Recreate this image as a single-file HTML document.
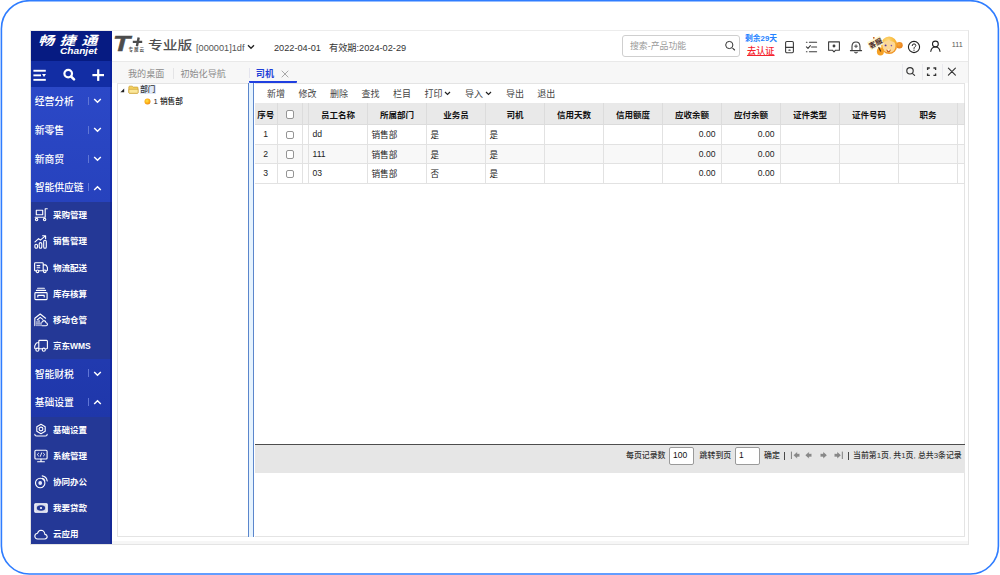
<!DOCTYPE html>
<html lang="zh-CN">
<head>
<meta charset="utf-8">
<title>司机</title>
<style>
*{box-sizing:border-box;margin:0;padding:0}
html,body{width:1000px;height:575px;overflow:hidden;background:#fff}
body{font-family:"Liberation Sans","Noto Sans CJK SC",sans-serif;font-size:9px;color:#222;position:relative}
.abs{position:absolute}
#frame{position:absolute;left:0;top:0}
#shot{position:absolute;left:30px;top:30px;width:938.6px;height:514.6px;background:#fff;border:1px solid #e4e4e4;border-top-color:#ececec;overflow:hidden}
/* sidebar */
#side{position:absolute;left:0;top:0;width:80.8px;height:515px;background:linear-gradient(#2b48c7 56px,#1f37aa 386px);color:#fff}
#logo{position:absolute;left:0;top:0;width:80.8px;height:30px;background:#061b82}
#tools{position:absolute;left:0;top:30px;width:80.8px;height:25.9px;background:#122da4}
.m1{position:absolute;left:0;width:80.8px;height:28.85px;font-size:9.8px;font-weight:500;line-height:29.8px;padding-left:3.7px;white-space:nowrap}
.m1 i{position:absolute;left:57.4px;top:10px;width:1px;height:8px;background:#6076d6}
.m1 svg{position:absolute;left:62px;top:11.4px}
.sub{position:absolute;left:0;width:80.8px;background:#243896}
.m2{position:absolute;left:0;width:80.8px;height:26.17px;font-size:8.5px;font-weight:700;line-height:26.6px;padding-left:22px;white-space:nowrap}
.m2 svg{position:absolute;left:3.3px;top:6.1px}
#lg1{position:absolute;left:7px;top:2.9px;font-size:12.4px;line-height:14px;font-weight:700;font-style:italic;letter-spacing:4.2px;white-space:nowrap;transform:scaleX(1.3);transform-origin:0 0;font-family:"Liberation Sans","Noto Sans CJK SC",sans-serif}
#lg2{position:absolute;left:29px;top:15.2px;font-size:8.6px;line-height:10px;font-weight:700;font-style:italic;white-space:nowrap;transform:scaleX(1.18);transform-origin:0 0}
/* header */
#head{position:absolute;left:80.8px;top:0;width:856px;height:31px;background:#fff;border-bottom:1.8px solid #e9e9e9}
#tabs{position:absolute;left:80.8px;top:31px;width:856px;height:20.5px;background:#f7f7f7}
.t{position:absolute;white-space:nowrap}
.wm{position:absolute;font-size:12px;line-height:14px;font-weight:700;color:rgba(0,0,0,0.022);transform:rotate(-15deg);transform-origin:0 50%;white-space:nowrap;pointer-events:none}

#head .t{top:0;line-height:30px;font-size:9.3px;color:#333}
#search{position:absolute;left:510.2px;top:4.4px;width:117.6px;height:21.6px;border:1px solid #cfcfcf;border-radius:3px;background:#fff}
#search span{position:absolute;left:7px;top:0;line-height:21px;font-size:8.9px;color:#999}
#tabs .t{top:0;line-height:25px;font-size:9.1px;color:#8a8a8a}
#tabs .sep{position:absolute;width:1px;background:#e9e9ee}
#act{position:absolute;left:137px;top:0;width:47.8px;height:20.6px;border-bottom:2px solid #1f3fe0;border-radius:0 0 1px 1px}
#tree{position:absolute;left:86px;top:51.5px;width:131.5px;height:454.8px;background:#fff;border:1px solid #e4e4e4;border-right:none}
#split{position:absolute;left:217.2px;top:51.5px;width:5.8px;height:454.3px;background:#e6f3fe;border-left:1.9px solid #5b86cc;border-right:1.9px solid #5b86cc}
#main{position:absolute;left:223.5px;top:51.5px;width:710.5px;height:454.8px;background:#fff;border:1px solid #e4e4e4;border-left:none}
#bstrip{position:absolute;left:80.8px;top:510px;width:858px;height:4px;background:#f6f6f6}
#sedge{position:absolute;left:78.8px;top:0;width:2px;height:515px;background:rgba(0,20,150,0.42)}
#tb{position:absolute;left:0;top:0;width:710px;height:20.5px}
#tb .t{top:0;line-height:20.4px;font-size:9px;color:#444}
#grid{position:absolute;left:0.5px;top:19.8px;width:709px;height:80px;border-collapse:collapse;table-layout:fixed;font-size:8.6px}
#grid th{height:21.1px;background:#e9e9e9;font-weight:700;font-size:8.5px;color:#111;border-right:1px solid #dcdcdc;border-bottom:1px solid #dcdcdc;text-align:center;padding:0;white-space:nowrap;overflow:hidden}
#grid td{height:19.65px;border-right:1px solid #e2e2e2;border-bottom:1px solid #e2e2e2;padding:0 0 0 3.5px;white-space:nowrap;overflow:hidden;color:#222}
#grid tr.alt td{background:#f8f8f8}
#grid td.c{text-align:center;padding:0}
#grid td.r{text-align:right;padding:0 5.5px 0 0}
.cb{display:inline-block;width:8.4px;height:8.4px;border:1px solid #959595;border-radius:2px;background:#fff;vertical-align:middle}
#pager{font-weight:500;position:absolute;left:0.5px;top:360px;width:709.5px;height:29.2px;background:#e6e6e6;border-top:1.2px solid #4d4d4d;font-size:7.9px;color:#333}
#pager .t{top:0;line-height:22.4px}
#pager .in{position:absolute;top:2.5px;height:17.5px;border:1px solid #9a9a9a;border-radius:2px;background:#fff;font-size:8.5px;line-height:15.5px;padding-left:3px;color:#111}

</style>
</head>
<body>
<svg id="frame" width="1000" height="575" viewBox="0 0 1000 575"><rect x="1.4" y="0.7" width="997" height="573.3" rx="28" ry="28" fill="#fff" stroke="#2f7dff" stroke-width="1.6"/></svg>
<div id="shot">
  <div id="side">
    <div id="logo"><span id="lg1">畅捷通</span><span id="lg2">Chanjet</span></div>
    <div id="tools"><svg width="81" height="27" viewBox="0 0 81 27"><g transform="translate(0 0.4)">
      <g fill="#fff"><rect x="2.4" y="8.4" width="12.4" height="1.9"/><rect x="2.4" y="13" width="7.6" height="1.9"/><rect x="2.4" y="17.5" width="12.4" height="1.9"/><path d="M11 12.5H15L13 15.5Z"/><rect x="61.4" y="12.6" width="11.6" height="2.2"/><rect x="66.1" y="7.9" width="2.2" height="11.6"/></g>
      <circle cx="37.2" cy="12.2" r="3.8" fill="none" stroke="#fff" stroke-width="2.2"/><path d="M40.2 15.2L43 18" stroke="#fff" stroke-width="2.6" stroke-linecap="round"/></g>
    </svg></div>
    <div class="m1" style="top:55.8px;padding-top:0px">经营分析<i></i><svg width="9" height="6" viewBox="0 0 9 6"><path d="M1.2 1 L4.5 4.3 L7.8 1" fill="none" stroke="#fff" stroke-width="1.45"/></svg></div>
    <div class="m1" style="top:84.65px;padding-top:0px">新零售<i></i><svg width="9" height="6" viewBox="0 0 9 6"><path d="M1.2 1 L4.5 4.3 L7.8 1" fill="none" stroke="#fff" stroke-width="1.45"/></svg></div>
    <div class="m1" style="top:113.5px;padding-top:0px">新商贸<i></i><svg width="9" height="6" viewBox="0 0 9 6"><path d="M1.2 1 L4.5 4.3 L7.8 1" fill="none" stroke="#fff" stroke-width="1.45"/></svg></div>
    <div class="m1" style="top:142.35px;padding-top:0px">智能供应链<i></i><svg width="9" height="6" viewBox="0 0 9 6"><path d="M1.2 5 L4.5 1.7 L7.8 5" fill="none" stroke="#fff" stroke-width="1.45"/></svg></div>
    <div class="sub" style="top:171.2px;height:157px">
      <div class="m2" style="top:0.0px"><svg width="14" height="14" viewBox="0 0 14 14" stroke="#fff" fill="none" stroke-width="1.12" stroke-linecap="round" stroke-linejoin="round"><rect x="2.3" y="2.2" width="6.4" height="4.6"/><path d="M13.3 0.8H11.2V9.3H1.2"/><circle cx="2.6" cy="11.6" r="1.2"/><circle cx="10.6" cy="11.6" r="1.2"/></svg>采购管理</div>
      <div class="m2" style="top:26.22px"><svg width="14" height="14" viewBox="0 0 14 14" stroke="#fff" fill="none" stroke-width="1.12" stroke-linecap="round" stroke-linejoin="round"><rect x="0.9" y="9.3" width="2.6" height="4" rx="1.3"/><rect x="5.2" y="7.6" width="2.6" height="5.7" rx="1.3"/><rect x="9.7" y="5.2" width="2.6" height="8.1" rx="1.3"/><path d="M1 6.8L4.6 3.6L6.4 5.2L11.4 0.9M8.6 0.8H11.6V3.8"/></svg>销售管理</div>
      <div class="m2" style="top:52.44px"><svg width="14" height="14" viewBox="0 0 14 14" stroke="#fff" fill="none" stroke-width="1.12" stroke-linecap="round" stroke-linejoin="round"><path d="M9.2 9.8H5.2M1.9 9.8H1.5Q0.6 9.8 0.6 8.9V2.6Q0.6 1.7 1.5 1.7H8.3Q9.2 1.7 9.2 2.6V9.8M9.2 3.9H11.2Q12 3.9 12.4 4.6L13.4 6.6V8.9Q13.4 9.8 12.5 9.8H12.4"/><circle cx="3.5" cy="10.3" r="1.3"/><circle cx="10.8" cy="10.3" r="1.3"/><path d="M3 4.6H5.8M3 6.8H5.8"/></svg>物流配送</div>
      <div class="m2" style="top:78.66px"><svg width="14" height="14" viewBox="0 0 14 14" stroke="#fff" fill="none" stroke-width="1.12" stroke-linecap="round" stroke-linejoin="round"><path d="M3.6 1.3H10.4M2.4 3.4H11.6"/><rect x="0.9" y="5.6" width="12.2" height="7" rx="0.8"/><path d="M3.8 10V8.4H10.2V10"/></svg>库存核算</div>
      <div class="m2" style="top:104.88px"><svg width="14" height="14" viewBox="0 0 14 14" stroke="#fff" fill="none" stroke-width="1.12" stroke-linecap="round" stroke-linejoin="round"><path d="M0.8 12.6V5.2L6.2 1L11.6 5.2M3.2 7L6.2 4.4L8.8 6.4"/><path d="M3 12.6V8.6M5 12.6V7.2M7 12.6V9.4" stroke-dasharray="0.9 0.9"/><path d="M8.2 12.8H12Q13.6 12.6 13.4 11Q13.2 9.8 12 9.7Q11.8 7.6 9.9 7.6Q8.2 7.7 7.9 9.4"/></svg>移动仓管</div>
      <div class="m2" style="top:131.1px"><svg width="14" height="14" viewBox="0 0 14 14" stroke="#fff" fill="none" stroke-width="1.12" stroke-linecap="round" stroke-linejoin="round"><path d="M4.6 9.8H8.4M12 9.8H12.6Q13.4 9.8 13.4 9V2.2Q13.4 1.4 12.6 1.4H5.6Q4.8 1.4 4.8 2.2V9.6M4.8 3.8H3.2Q2.4 3.8 2 4.5L0.7 7V9Q0.7 9.8 1.5 9.8"/><circle cx="3.4" cy="10.7" r="1.55"/><circle cx="9.8" cy="10.7" r="1.55"/></svg>京东WMS</div>
    </div>
    <div class="m1" style="top:328.2px;padding-top:0.8px">智能财税<i></i><svg width="9" height="6" viewBox="0 0 9 6"><path d="M1.2 1 L4.5 4.3 L7.8 1" fill="none" stroke="#fff" stroke-width="1.45"/></svg></div>
    <div class="m1" style="top:357.1px;padding-top:0.4px">基础设置<i></i><svg width="9" height="6" viewBox="0 0 9 6"><path d="M1.2 5 L4.5 1.7 L7.8 5" fill="none" stroke="#fff" stroke-width="1.45"/></svg></div>
    <div class="sub" style="top:386px;height:130px">
      <div class="m2" style="top:0.0px"><svg width="14" height="14" viewBox="0 0 14 14" stroke="#fff" fill="none" stroke-width="1.12" stroke-linecap="round" stroke-linejoin="round"><path d="M7 1.3L11.2 3.7V8.3L7 10.7L2.8 8.3V3.7Z"/><circle cx="7" cy="6" r="1.9"/><path d="M0.8 11.2Q0.8 13 2.6 13H11.4Q13.2 13 13.2 11.2"/></svg>基础设置</div>
      <div class="m2" style="top:26.05px"><svg width="14" height="14" viewBox="0 0 14 14" stroke="#fff" fill="none" stroke-width="1.12" stroke-linecap="round" stroke-linejoin="round"><rect x="0.9" y="1.2" width="12.2" height="8.8" rx="1"/><path d="M7 10V12.6M3.6 12.8H10.4"/><path d="M4.6 4.2L3.2 5.6L4.6 7M9.4 4.2L10.8 5.6L9.4 7M7.7 3.8L6.3 7.4" stroke-width="0.9"/></svg>系统管理</div>
      <div class="m2" style="top:52.1px"><svg width="14" height="14" viewBox="0 0 14 14" stroke="#fff" fill="none" stroke-width="1.12" stroke-linecap="round" stroke-linejoin="round"><circle cx="6.2" cy="8" r="4.7"/><circle cx="6.2" cy="8" r="1.9" fill="#e8ecff" stroke="none"/><path d="M8.2 0.9Q12.6 1.6 13.2 6"/><path d="M8.4 3.4Q10.4 3.9 10.8 5.8"/></svg>协同办公</div>
      <div class="m2" style="top:78.15px"><svg width="14" height="14" viewBox="0 0 14 14" stroke="#fff" fill="none" stroke-width="1.12" stroke-linecap="round" stroke-linejoin="round"><rect x="0.8" y="2.8" width="12.4" height="8.4" rx="0.8" fill="rgba(255,255,255,0.8)"/><ellipse cx="7" cy="7" rx="4.2" ry="2.8" fill="#243896" stroke="none"/><circle cx="7" cy="7" r="1.1" fill="#fff" stroke="none"/></svg>我要贷款</div>
      <div class="m2" style="top:104.2px"><svg width="14" height="14" viewBox="0 0 14 14" stroke="#fff" fill="none" stroke-width="1.12" stroke-linecap="round" stroke-linejoin="round"><path d="M3.6 12H10.8Q13.2 11.8 13.2 9.6Q13 7.6 10.9 7.4Q10.4 3.2 7 3.2Q4.2 3.4 3.6 6.2Q0.8 6.6 0.8 9.2Q1 11.8 3.6 12Z"/></svg>云应用</div>
    </div>
    <div id="sedge"></div>
  </div>
  <div id="bstrip"></div>
  <div id="head">
    <span class="t" style="left:0.8px;top:2.7px;line-height:20px;font-size:21.5px;font-weight:700;font-style:italic;color:#4c4c4c;-webkit-text-stroke:0.5px #4c4c4c;transform:scaleX(1.3);transform-origin:0 0">T</span>
    <svg class="abs" style="left:20.6px;top:6.2px" width="12" height="10" viewBox="0 0 12 10"><path d="M0.8 4.9H10.2M6.7 0.4L4.9 9.2" stroke="#4c4c4c" stroke-width="2.4" fill="none"/></svg>
    <span class="t" style="left:16.8px;top:16.2px;line-height:5px;font-size:4.6px;font-weight:700;color:#555;letter-spacing:0.9px">专属云</span>
    <span class="t" style="left:36.4px;top:6.4px;line-height:18px;font-size:12.2px;font-weight:500;color:#505050;transform:scaleX(1.21);transform-origin:0 0">专业版</span>
    <span class="t" style="left:84.2px;top:11px;line-height:12px;font-size:9.2px;color:#555">[000001]1df</span>
    <svg class="abs" style="left:135.0px;top:13px" width="8" height="6" viewBox="0 0 8 6"><path d="M1 1.2L4 4.3L7 1.2" fill="none" stroke="#222" stroke-width="1.3"/></svg>
    <span class="t" style="left:162.2px;top:11.2px;line-height:12px;font-size:9.2px">2022-04-01</span>
    <span class="t" style="left:217.2px;top:11.2px;line-height:12px;font-size:9.2px">有效期:2024-02-29</span>
    <div id="search"><span>搜索-产品功能</span><svg class="abs" style="left:101px;top:3.6px" width="13" height="13" viewBox="0 0 13 13"><circle cx="5.3" cy="5" r="3.6" fill="none" stroke="#333" stroke-width="1"/><path d="M8.8 8.4L10.6 10" stroke="#333" stroke-width="1.1" stroke-linecap="round"/></svg></div>
    <span class="t" style="left:633.2px;top:3px;line-height:10px;font-size:7.8px;font-weight:700;color:#2382ff">剩余29天</span>
    <span class="t" style="left:635.2px;top:15.2px;line-height:11px;font-size:9.2px;font-weight:500;color:#f5222d;text-decoration:underline">去认证</span>
    <svg class="abs" style="left:671.2px;top:8px" width="82" height="16" viewBox="0 0 82 16" fill="none" stroke="#3c3c3c" stroke-width="1.1" stroke-linecap="round" stroke-linejoin="round">
      <rect x="2.6" y="2.5" width="7.8" height="11.2" rx="1.2"/><path d="M2.6 8.4H10.4"/><path d="M6 11.2H7" stroke-width="1.3"/>
      <path d="M23.4 3.2H24M26.4 3.2H33.6M28.6 8H33.6M23.4 12.8H24M26.4 12.8H33.6M23.4 7.8L25 9.4L27.4 6.6"/>
      <path d="M45.6 2.9H56.4V11.2H52.6L51 12.8L49.4 11.2H45.6Z"/><circle cx="51" cy="7" r="0.9" fill="#3c3c3c"/>
      <path d="M67.4 11.6H78.6M69 11.6V7.6Q69 3 73 3Q77 3 77 7.6V11.6M71.8 13.4Q73 14.6 74.2 13.4"/><path d="M73 5.8V8.6M71.6 7.2H74.4" stroke-width="0.9"/>
    </svg>
    <svg class="abs" style="left:754.2px;top:2px" width="40" height="26" viewBox="0 0 40 26">
      <defs><radialGradient id="mk" cx="0.42" cy="0.3" r="0.75"><stop offset="0" stop-color="#fde08a"/><stop offset="0.55" stop-color="#f9b93a"/><stop offset="1" stop-color="#ee8a1c"/></radialGradient>
      <radialGradient id="me" cx="0.4" cy="0.4" r="0.7"><stop offset="0" stop-color="#f7a63a"/><stop offset="1" stop-color="#e57a14"/></radialGradient></defs>
      <circle cx="33.4" cy="12.2" r="3.3" fill="url(#me)"/>
      <ellipse cx="23.1" cy="12.2" rx="8.1" ry="8.8" fill="url(#mk)"/>
      <path d="M16.6 13Q16.4 8 20 8.2Q22 8.4 22.8 6.6Q24 8.6 26.4 8.4Q29.6 8.6 29.4 13.4Q29 19.4 23 19.6Q17 19.4 16.6 13Z" fill="#fcd898"/>
      <ellipse cx="14.4" cy="18.4" rx="3.5" ry="4" fill="#f5a024"/>
      <circle cx="19.6" cy="12.4" r="0.95" fill="#54349a"/><circle cx="25.4" cy="12.6" r="0.8" fill="#7a5ab0"/>
      <path d="M20.2 16.6Q22.6 17.6 25 16.6Q24.4 19.4 22.6 19.4Q20.8 19.4 20.2 16.6Z" fill="#c8601a"/><rect x="21.8" y="16.6" width="1.7" height="1.2" fill="#fff"/>
      <path d="M12.6 14L14.8 18.6" stroke="#5a3412" stroke-width="1.2"/>
      <g transform="rotate(-27 9.4 10)"><rect x="2.2" y="5.4" width="14.4" height="9.4" rx="0.6" fill="#fdf6cc"/><text x="9.4" y="12.8" font-size="7" font-weight="700" text-anchor="middle" fill="#4a2828" font-family="'Liberation Sans','Noto Sans CJK SC',sans-serif">客服</text></g>
      <circle cx="7.8" cy="4.8" r="0.9" fill="#c85a10"/>
    </svg>
    <svg class="abs" style="left:794.2px;top:8px" width="38" height="16" viewBox="0 0 38 16" fill="none" stroke="#222" stroke-width="1.1" stroke-linecap="round">
      <circle cx="8" cy="8" r="5.6"/><path d="M6.2 6.6Q6.2 4.9 8 4.9Q9.8 4.9 9.8 6.5Q9.8 7.5 8.6 8.1Q8 8.5 8 9.4" stroke-width="1"/><circle cx="8" cy="11.2" r="0.6" fill="#222" stroke="none"/>
      <circle cx="29.4" cy="5" r="2.9"/><path d="M24.8 12.4Q25.4 8 29.4 8Q33.4 8 34 12.4"/>
    </svg>
    <span class="t" style="left:840.0px;top:9px;line-height:10px;font-size:7.2px;color:#555">111</span>
  </div>
  <div id="tabs">
    <span class="t" style="left:16.2px">我的桌面</span>
    <div class="sep" style="left:61.2px;top:6px;height:10.5px;background:#e4e4e6"></div>
    <span class="t" style="left:68.6px">初始化导航</span>
    <div id="act"><span class="t" style="left:7px;top:0;font-weight:700;color:#1f3fd8">司机</span>
      <svg class="abs" style="left:32.6px;top:7.6px" width="8" height="8" viewBox="0 0 8 8"><path d="M0.7 0.7L7.3 7.3M7.3 0.7L0.7 7.3" stroke="#9a9a9a" stroke-width="0.85" fill="none"/></svg><div class="sep" style="left:0.4px;top:6px;height:10px;background:#e4e4ee"></div></div>
    <div class="sep" style="left:790.2px;top:2px;height:16px"></div>
    <div class="sep" style="left:810.5px;top:2px;height:16px"></div>
    <div class="sep" style="left:830.5px;top:2px;height:16px"></div>
    <svg class="abs" style="left:793.2px;top:3px" width="54" height="14" viewBox="0 0 54 14" fill="none" stroke="#333" stroke-width="1.15" stroke-linecap="round">
      <circle cx="5" cy="5.8" r="3.2"/><path d="M7.6 8.6L9.6 10.4"/>
      <path d="M22.6 5V3H24.8M28.4 3H30.6V5M30.6 8.4V10.4H28.4M24.8 10.4H22.6V8.4" stroke-width="1.35" stroke-linecap="butt"/>
      <path d="M43.4 3.2L50.4 10.2M50.4 3.2L43.4 10.2" stroke-width="1.1"/>
    </svg>
  </div>
  <div id="tree">
    <svg class="abs" style="left:2.1px;top:4.1px" width="5" height="5" viewBox="0 0 5 5"><path d="M4.2 0.4V4.2H0.4Z" fill="#222"/></svg>
    <svg class="abs" style="left:9.7px;top:1.1px" width="11" height="9.4" viewBox="0 0 11 10" preserveAspectRatio="none"><path d="M0.8 2.2Q0.8 1.2 1.8 1.2H4.2L5.2 2.2H9.2Q10 2.2 10 3V8Q10 8.8 9.2 8.8H1.6Q0.8 8.8 0.8 8Z" fill="#f3cf5e" stroke="#c79a2c" stroke-width="0.7"/><path d="M0.9 4.6H10.1V8Q10.1 8.8 9.3 8.8H1.7Q0.9 8.8 0.9 8Z" fill="#fbe79a" stroke="#c79a2c" stroke-width="0.6"/></svg>
    <span class="t" style="left:21.7px;top:1.3px;line-height:9px;font-size:7.6px;font-weight:500;background:#dfe9f8;color:#333;padding:0 0.6px;margin-top:0.4px">部门</span>
    <svg class="abs" style="left:25.9px;top:14.9px" width="7" height="7" viewBox="0 0 7 7"><defs><radialGradient id="ob" cx="0.42" cy="0.4" r="0.6"><stop offset="0" stop-color="#ffe34a"/><stop offset="0.55" stop-color="#fdb61a"/><stop offset="1" stop-color="#f08a14"/></radialGradient></defs><circle cx="3.5" cy="3.5" r="3" fill="url(#ob)"/></svg>
    <span class="t" style="left:35.5px;top:12.7px;line-height:9.4px;font-size:7.7px;font-weight:500;color:#222;margin-top:0.6px">1 销售部</span>
  </div>
  <div id="split"></div>
  <div id="main">
    <div id="tb">
      <span class="t" style="left:12.5px">新增</span>
      <span class="t" style="left:44.1px">修改</span>
      <span class="t" style="left:75.5px">删除</span>
      <span class="t" style="left:107.1px">查找</span>
      <span class="t" style="left:138.5px">栏目</span>
      <span class="t" style="left:169.9px">打印</span>
      <svg class="abs" style="left:189.3px;top:7.2px" width="7" height="5" viewBox="0 0 7 5"><path d="M1 1L3.5 3.5L6 1" fill="none" stroke="#222" stroke-width="1.2"/></svg>
      <span class="t" style="left:210.5px">导入</span>
      <svg class="abs" style="left:230.1px;top:7.2px" width="7" height="5" viewBox="0 0 7 5"><path d="M1 1L3.5 3.5L6 1" fill="none" stroke="#222" stroke-width="1.2"/></svg>
      <span class="t" style="left:251.5px">导出</span>
      <span class="t" style="left:282.7px">退出</span>
    </div>
    <table id="grid">
      <colgroup><col style="width:22px"><col style="width:25.5px"><col style="width:6px"><col style="width:59px"><col style="width:59px"><col style="width:59px"><col style="width:59px"><col style="width:59px"><col style="width:59px"><col style="width:59px"><col style="width:59px"><col style="width:59px"><col style="width:59px"><col style="width:59px"><col style="width:6.5px"></colgroup>
      <tr><th>序号</th><th><span class="cb"></span></th><th></th><th>员工名称</th><th>所属部门</th><th>业务员</th><th>司机</th><th>信用天数</th><th>信用额度</th><th>应收余额</th><th>应付余额</th><th>证件类型</th><th>证件号码</th><th>职务</th><th></th></tr>
      <tr><td class="c">1</td><td class="c"><span class="cb"></span></td><td></td><td>dd</td><td>销售部</td><td>是</td><td>是</td><td></td><td></td><td class="r">0.00</td><td class="r">0.00</td><td></td><td></td><td></td><td></td></tr>
      <tr class="alt"><td class="c">2</td><td class="c"><span class="cb"></span></td><td></td><td>111</td><td>销售部</td><td>是</td><td>是</td><td></td><td></td><td class="r">0.00</td><td class="r">0.00</td><td></td><td></td><td></td><td></td></tr>
      <tr><td class="c">3</td><td class="c"><span class="cb"></span></td><td></td><td>03</td><td>销售部</td><td>否</td><td>是</td><td></td><td></td><td class="r">0.00</td><td class="r">0.00</td><td></td><td></td><td></td><td></td></tr>
    </table>
    <div id="pager">
      <span class="t" style="left:371px">每页记录数</span>
      <div class="in" style="left:414px;width:24.6px">100</div>
      <span class="t" style="left:444.6px">跳转到页</span>
      <div class="in" style="left:480px;width:25px">1</div>
      <span class="t" style="left:509px">确定</span>
      <div class="abs" style="left:529.3px;top:7.4px;width:1.2px;height:7.8px;background:#4a4a4a"></div>
      <svg class="abs" style="left:535px;top:6.6px" width="56" height="9" viewBox="0 0 56 9" fill="#888" stroke="#f4f4f4" stroke-width="0.5">
        <rect x="0.9" y="0.6" width="1.1" height="7.4" stroke="none"/><path d="M7.4 2.5V0.4L3.2 4.2L7.4 8V5.9H9.8V2.5Z"/>
        <path d="M19.2 2.5V0.4L15 4.2L19.2 8V5.9H21.8V2.5Z"/>
        <path d="M33 2.5V0.4L37.2 4.2L33 8V5.9H30.2V2.5Z"/>
        <path d="M47 2.5V0.4L51.2 4.2L47 8V5.9H44.2V2.5Z"/><rect x="51.8" y="0.6" width="1.1" height="7.4" stroke="none"/>
      </svg>
      <div class="abs" style="left:592.5px;top:7.4px;width:1.2px;height:7.8px;background:#4a4a4a"></div>
      <span class="t" style="left:598px">当前第1页, 共1页, 总共3条记录</span>
    </div>
  </div>
  <div class="wm" style="left:121px;top:146px">1114606<br>04011118</div>
  <div class="wm" style="left:121px;top:229px">1114606<br>04011118</div>
  <div class="wm" style="left:121px;top:312px">1114606<br>04011118</div>
  <div class="wm" style="left:121px;top:395px">1114606<br>04011118</div>
  <div class="wm" style="left:121px;top:478px">1114606<br>04011118</div>
  <div class="wm" style="left:325px;top:146px">1114606<br>04011118</div>
  <div class="wm" style="left:325px;top:229px">1114606<br>04011118</div>
  <div class="wm" style="left:325px;top:312px">1114606<br>04011118</div>
  <div class="wm" style="left:325px;top:395px">1114606<br>04011118</div>
  <div class="wm" style="left:325px;top:478px">1114606<br>04011118</div>
  <div class="wm" style="left:527px;top:146px">1114606<br>04011118</div>
  <div class="wm" style="left:527px;top:229px">1114606<br>04011118</div>
  <div class="wm" style="left:527px;top:312px">1114606<br>04011118</div>
  <div class="wm" style="left:527px;top:395px">1114606<br>04011118</div>
  <div class="wm" style="left:527px;top:478px">1114606<br>04011118</div>
  <div class="wm" style="left:729px;top:146px">1114606<br>04011118</div>
  <div class="wm" style="left:729px;top:229px">1114606<br>04011118</div>
  <div class="wm" style="left:729px;top:312px">1114606<br>04011118</div>
  <div class="wm" style="left:729px;top:395px">1114606<br>04011118</div>
  <div class="wm" style="left:729px;top:478px">1114606<br>04011118</div>
</div>
</body>
</html>
